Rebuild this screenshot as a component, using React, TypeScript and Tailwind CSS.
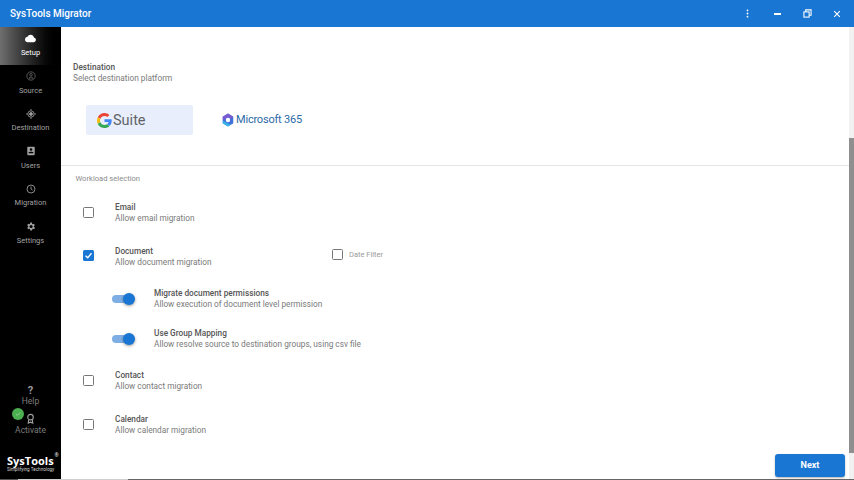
import React from "react";

const font = { fontFamily: "Roboto, sans-serif" };

function NavItem({ label, active, icon }: { label: string; active?: boolean; icon: React.ReactNode }) {
  return (
    <div className={`flex h-[37.5px] w-full flex-col items-center pt-[4.5px] ${active ? "bg-gradient-to-r from-[#6f6f6f] to-[#000] text-white" : "text-[#a0a0a0]"}`}>
      <div className="flex h-[14px] items-center justify-center">{icon}</div>
      <div className="mt-[1.5px] text-[7.5px] leading-[12px]">{label}</div>
    </div>
  );
}

function Check({ checked }: { checked?: boolean }) {
  if (checked)
    return (
      <div className="flex h-[11px] w-[11px] items-center justify-center rounded-[1.5px] bg-[#1976d2]">
        <svg viewBox="0 0 12 12" className="h-[9px] w-[9px]" fill="none" stroke="#fff" strokeWidth="1.8"><path d="M2 6.2 5 9l5-6" /></svg>
      </div>
    );
  return <div className="h-[11px] w-[11px] rounded-[1.5px] border-[1.5px] border-[#777] bg-white" />;
}

function Row({ title, desc, checked, mb, children }: { title: string; desc: string; checked?: boolean; mb: string; children?: React.ReactNode }) {
  return (
    <div className={`flex items-center ${mb}`}>
      <div className="flex w-[54px] justify-center pb-[2px]"><Check checked={checked} /></div>
      <div className="w-[217px]">
        <div className="text-[8.25px] leading-[11px] font-medium text-[#555]">{title}</div>
        <div className="text-[8.25px] leading-[11px] text-[#7a7a7a]">{desc}</div>
      </div>
      {children}
    </div>
  );
}

function ToggleRow({ title, desc, mb }: { title: string; desc: string; mb: string }) {
  return (
    <div className={`flex items-center ${mb}`}>
      <div className="ml-[51px] flex w-[42px] items-center">
        <div className="relative h-[8px] w-[22px] rounded-full bg-[#7eaee4]">
          <div className="absolute right-[-1px] top-[-2px] h-[12px] w-[12px] rounded-full bg-[#1976d2] shadow-[0_1px_3px_rgba(0,0,0,0.4)]" />
        </div>
      </div>
      <div>
        <div className="text-[8.25px] leading-[11px] font-medium text-[#555]">{title}</div>
        <div className="text-[8.25px] leading-[11px] text-[#7a7a7a]">{desc}</div>
      </div>
    </div>
  );
}

function GLogo() {
  return (
    <svg viewBox="0 0 48 48" className="h-[15px] w-[15px]">
      <path fill="#EA4335" d="M24 9.5c3.5 0 6.700 1.300 9.100 3.500l6.800-6.800C35.800 2.400 30.300 0 24 0 14.600 0 6.500 5.400 2.600 13.200l7.900 6.200C12.400 13.600 17.700 9.500 24 9.500z" />
      <path fill="#4285F4" d="M47 24.500c0-1.600-.2-3.200-.4-4.700H24v9h12.900c-.6 3-2.200 5.500-4.700 7.200l7.600 5.900C44.300 37.700 47 31.600 47 24.500z" />
      <path fill="#FBBC05" d="M10.500 28.600c-.5-1.500-.8-3-.8-4.600s.3-3.200.8-4.600l-7.900-6.200C.9 16.500 0 20.100 0 24s.9 7.500 2.600 10.800l7.900-6.200z" />
      <path fill="#34A853" d="M24 48c6.500 0 11.900-2.100 15.800-5.800L32.200 36.300c-2.100 1.400-4.900 2.300-8.200 2.300-6.300 0-11.600-4.100-13.500-9.900l-7.900 6.200C6.500 42.600 14.600 48 24 48z" />
    </svg>
  );
}

function MsLogo() {
  return (
    <svg viewBox="0 0 24 24" className="h-[14px] w-[14px]">
      <path fill="#3f6fd8" stroke="#3f6fd8" strokeWidth="2" strokeLinejoin="round" d="M12 2 4 7v10l8 5 8-5V7z" />
      <path fill="#7a5bd0" d="M12 1 3 6.500V13l5-3 4-2.500 5 2.500 4-3.500z" />
      <path fill="#36b4e8" d="M3 13v4.500L12 23l5-3-9-4z" />
      <circle cx="12" cy="12" r="3.800" fill="#fff" />
    </svg>
  );
}

export default function App() {
  return (
    <div className="flex h-[480px] w-[854px] flex-col overflow-hidden bg-white" style={font}>
      <header className="flex h-[27px] shrink-0 items-center bg-[#1976d2] pl-[10px] text-white">
        <div className="text-[10px] font-medium">SysTools Migrator</div>
        <div className="ml-auto flex items-center">
          <svg viewBox="0 0 10 10" className="mr-[22px] h-[9px] w-[9px]" fill="#fff"><circle cx="5" cy="1.500" r="1" /><circle cx="5" cy="5" r="1" /><circle cx="5" cy="8.500" r="1" /></svg>
          <div className="mr-[22px] h-[2px] w-[7px] bg-white" />
          <svg viewBox="0 0 10 10" className="mr-[21px] h-[9px] w-[9px]" fill="none" stroke="#fff" strokeWidth="1.200"><rect x="1" y="3.200" width="5.800" height="5.800" /><path d="M3 3V1h6v6H6.800" /></svg>
          <svg viewBox="0 0 10 10" className="mr-[13px] h-[8px] w-[8px]" fill="none" stroke="#fff" strokeWidth="1.400"><path d="M1.500 1.500l7 7M8.500 1.500l-7 7" /></svg>
        </div>
      </header>
      <div className="flex min-h-0 flex-1">
        <aside className="flex w-[61px] shrink-0 flex-col items-center bg-black">
          <NavItem label="Setup" active icon={<svg viewBox="0 0 24 24" className="h-[11px] w-[11px]" fill="#fff"><path d="M19.350 10.040A7.490 7.490 0 0 0 12 4a7.500 7.500 0 0 0-6.650 4.040A6 6 0 0 0 6 20h13a5 5 0 0 0 .35-9.960z" /></svg>} />
          <NavItem label="Source" icon={<svg viewBox="0 0 12 12" className="h-[10px] w-[10px]" fill="none" stroke="#6f6f6f" strokeWidth="0.900"><circle cx="6" cy="6" r="5" /><circle cx="6" cy="4.500" r="1.500" /><path d="M4.500 10V7.500h3V10" /></svg>} />
          <NavItem label="Destination" icon={<svg viewBox="0 0 12 12" className="h-[10px] w-[10px]" fill="none" stroke="#a0a0a0" strokeWidth="1"><circle cx="6" cy="6" r="3.800" /><circle cx="6" cy="6" r="1.700" fill="#a0a0a0" /><path d="M6 0v2M6 10v2M0 6h2M10 6h2" /></svg>} />
          <NavItem label="Users" icon={<svg viewBox="0 0 12 12" className="h-[10px] w-[10px]"><rect x="1.500" y="1" width="9" height="10" rx="1" fill="#a0a0a0" /><circle cx="6" cy="4.300" r="1.500" fill="#000" /><path d="M3 8c.5-1.500 5.500-1.500 6 0v.6H3z" fill="#000" /></svg>} />
          <NavItem label="Migration" icon={<svg viewBox="0 0 12 12" className="h-[10px] w-[10px]" fill="none" stroke="#a0a0a0" strokeWidth="1"><circle cx="6" cy="6" r="4.800" /><path d="M6 3v3l2 1.500" /></svg>} />
          <NavItem label="Settings" icon={<svg viewBox="0 0 24 24" className="h-[11px] w-[11px]" fill="#a0a0a0"><path d="M19.400 13a7.500 7.500 0 0 0 0-2l2.100-1.600-2-3.500-2.500 1a7.500 7.500 0 0 0-1.700-1L15.400 3.200h-4l-.4 2.700a7.500 7.500 0 0 0-1.700 1l-2.500-1-2 3.500L6.900 11a7.500 7.500 0 0 0 0 2l-2.100 1.600 2 3.500 2.500-1a7.500 7.500 0 0 0 1.700 1l.4 2.700h4l.4-2.700a7.500 7.500 0 0 0 1.700-1l2.500 1 2-3.500zM13.200 15.500a3.500 3.500 0 1 1 0-7 3.500 3.500 0 0 1 0 7z" /></svg>} />
          <div className="mt-auto flex w-full flex-col items-center pb-[6px]">
            <div className="text-[11px] leading-[10px] font-bold text-[#9a9a9a]">?</div>
            <div className="text-[8.5px] leading-[11px] text-[#7c7c7c]">Help</div>
            <div className="relative mt-[6px] flex h-[12px] w-full justify-center">
              <svg viewBox="0 0 12 12" className="h-[11px] w-[11px]" fill="none" stroke="#a0a0a0" strokeWidth="1.200"><circle cx="6" cy="4.500" r="3" /><path d="M4 7.500 3.500 11 6 10l2.500 1L8 7.500" /></svg>
              <div className="absolute left-[12px] top-[-5px] flex h-[12px] w-[12px] items-center justify-center rounded-full bg-[#4caf50]">
                <svg viewBox="0 0 12 12" className="h-[8px] w-[8px]" fill="none" stroke="#a5d6a7" strokeWidth="1.200"><path d="M3 6.200 5 8l4-4" /></svg>
              </div>
            </div>
            <div className="text-[8.5px] leading-[11px] text-[#7c7c7c]">Activate</div>
            <div className="mt-[20px] w-full pl-[7px] text-left text-white">
              <div className="relative w-fit text-[11px] leading-[10px] font-bold" style={{ fontFamily: "'Open Sans', sans-serif" }}>
                SysTools
                <span className="absolute right-[-5px] top-[-3px] text-[5px] leading-[5px] font-normal">®</span>
              </div>
              <div className="mt-[1px] text-[4.6px] leading-[6px] whitespace-nowrap text-[#d0d0d0]">Simplifying Technology</div>
            </div>
          </div>
        </aside>
        <main className="relative min-w-0 flex-1">
          <div className="h-[139px] border-b border-[#e4e4e4] pl-[12px] pt-[35px]">
            <div className="text-[8.25px] leading-[11px] font-medium text-[#555]">Destination</div>
            <div className="text-[8.25px] leading-[11px] text-[#7a7a7a]">Select destination platform</div>
            <div className="mt-[21px] ml-[13px] flex items-center">
              <div className="flex h-[30px] w-[107px] items-center rounded-[2px] bg-[#e8eefb] pl-[11px]">
                <GLogo />
                <span className="ml-[1px] mt-[2px] text-[14.5px] text-[#5f6368]">Suite</span>
              </div>
              <div className="ml-[28px] flex items-center">
                <MsLogo />
                <span className="ml-[1px] mt-[1px] text-[11px] tracking-[-0.2px] text-[#2c6aa8]">Microsoft 365</span>
              </div>
            </div>
          </div>
          <div>
            <div className="ml-[14.500px] mt-[7px] mb-[17px] text-[7.6px] leading-[12px] text-[#8c8c8c]">Workload selection</div>
            <Row title="Email" desc="Allow email migration" mb="mb-[21.5px]" />
            <Row title="Document" desc="Allow document migration" checked mb="mb-[20.5px]">
              <div className="mb-[4px] flex items-center">
                <Check />
                <span className="ml-[6px] text-[7.5px] text-[#9a9a9a]">Date Filter</span>
              </div>
            </Row>
            <ToggleRow title="Migrate document permissions" desc="Allow execution of document level permission" mb="mb-[18px]" />
            <ToggleRow title="Use Group Mapping" desc="Allow resolve source to destination groups, using csv file" mb="mb-[20px]" />
            <Row title="Contact" desc="Allow contact migration" mb="mb-[22px]" />
            <Row title="Calendar" desc="Allow calendar migration" mb="mb-0" />
          </div>
          <button className="absolute bottom-[2px] right-[9px] h-[23px] w-[70px] rounded-[3px] bg-[#1976d2] text-[9px] font-bold text-white shadow-[0_1px_2px_rgba(0,0,0,0.3)]">Next</button>
          <div className="absolute right-0 top-0 h-full w-[5px] bg-[#f1f1f1]">
            <div className="mt-[111px] h-[315px] w-full bg-[#8f8f8f]" />
          </div>
        </main>
      </div>
      <div className="flex h-[1px] shrink-0">
        <div className="w-[18px] bg-[#555]" />
        <div className="w-[110px] bg-[#cfcfcf]" />
        <div className="flex-1 bg-[#666]" />
      </div>
    </div>
  );
}
